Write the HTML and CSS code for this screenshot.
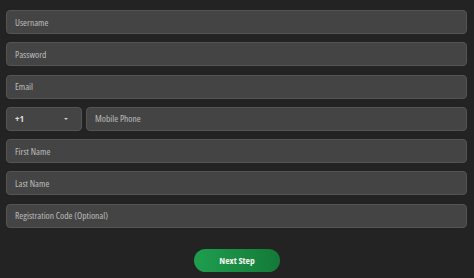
FILE: index.html
```html
<!DOCTYPE html>
<html>
<head>
<meta charset="utf-8">
<link rel="stylesheet" href="styles.css">
</head>
<body>
<form class="form">
  <div class="field">Username</div>
  <div class="field">Password</div>
  <div class="field">Email</div>
  <div class="row">
    <div class="field select"><span class="code">+1</span><span class="caret"></span></div>
    <div class="field grow">Mobile Phone</div>
  </div>
  <div class="field">First Name</div>
  <div class="field">Last Name</div>
  <div class="field">Registration Code (Optional)</div>
  <div class="actions"><button type="button" class="btn">Next Step</button></div>
</form>
</body>
</html>
```
FILE: styles.css
```css
html, body {
  margin: 0;
  padding: 0;
  background: #232323;
  width: 474px;
  height: 278px;
  overflow: hidden;
}
.form {
  display: flex;
  flex-direction: column;
  gap: 8.3px;
  padding: 10px 7px 0 6px;
  font-family: "Open Sans", sans-serif;
  font-stretch: 75%;
}
.field {
  box-sizing: border-box;
  height: 24px;
  background: #444444;
  border: 1px solid #545454;
  border-radius: 4px;
  color: #bdbdbd;
  font-size: 9.5px;
  font-weight: 500;
  display: flex;
  align-items: center;
  padding-left: 8px;
}
.row {
  display: flex;
  gap: 4px;
}
.select {
  width: 76px;
  flex: none;
  justify-content: space-between;
  padding-right: 13px;
  color: #dcdcdc;
  font-weight: 700;
}
.caret {
  width: 0;
  height: 0;
  border-left: 2.5px solid transparent;
  border-right: 2.5px solid transparent;
  border-top: 2.5px solid #d0d0d0;
}
.grow {
  flex: 1;
}
.actions {
  display: flex;
  justify-content: center;
  padding-top: 13px;
  padding-left: 1px;
}
.btn {
  width: 86px;
  height: 23px;
  border: none;
  border-radius: 12px;
  background: linear-gradient(90deg, #1f9e4e, #137a37);
  color: #f2f2f2;
  font-family: "Open Sans", sans-serif;
  font-stretch: 75%;
  font-size: 9.5px;
  font-weight: 700;
  padding: 0;
}
```
